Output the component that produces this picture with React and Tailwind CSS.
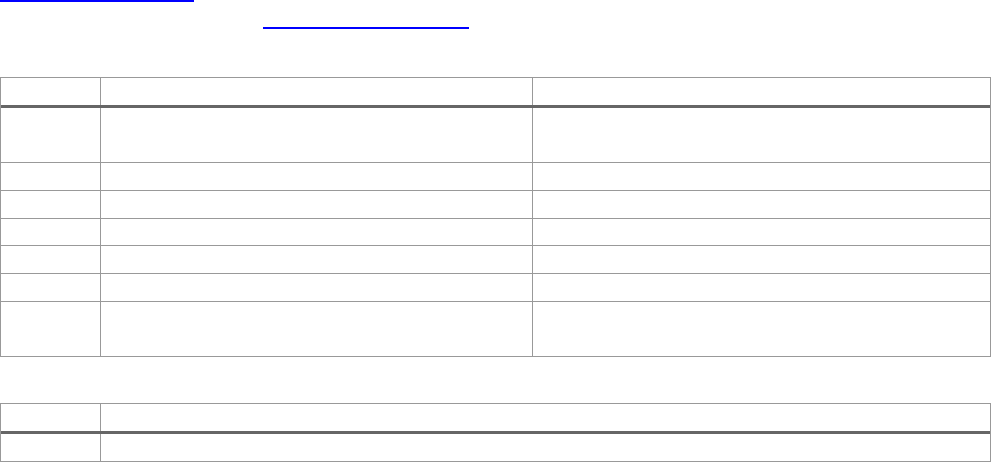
export default function App() {
  const rows = [54, 27, 27, 26, 27, 27, 54]

  return (
    <div className="w-[991px] bg-white font-['Liberation_Sans',sans-serif] text-sm text-black">
      {/* Links (only underlines visible) */}
      <a href="#" className="block w-[194px] h-[2px] bg-[#0000ff]" aria-label="link" />
      <div className="h-[25px]" />
      <a href="#" className="block ml-[263px] w-[206px] h-[2px] bg-[#0000ff]" aria-label="link" />

      {/* Table 1 */}
      <div className="mt-[48px] border border-[#999999]">
        <div className="flex h-[30px] border-b-[3px] border-[#666666]">
          <div className="w-[100px] border-r border-[#999999]" />
          <div className="w-[432px] border-r border-[#999999]" />
          <div className="flex-1" />
        </div>
        {rows.map((h, i) => (
          <div
            key={i}
            className={`flex ${i < rows.length - 1 ? 'border-b border-[#999999]' : ''}`}
            style={{ height: i < rows.length - 1 ? h + 1 : h }}
          >
            <div className="w-[100px] border-r border-[#999999]" />
            <div className="w-[432px] border-r border-[#999999]" />
            <div className="flex-1" />
          </div>
        ))}
      </div>

      {/* Table 2 */}
      <div className="mt-[46px] border border-[#999999]">
        <div className="flex h-[30px] border-b-[3px] border-[#666666]">
          <div className="w-[100px] border-r border-[#999999]" />
          <div className="flex-1" />
        </div>
        <div className="flex h-[27px]">
          <div className="w-[100px] border-r border-[#999999]" />
          <div className="flex-1" />
        </div>
      </div>
    </div>
  )
}
